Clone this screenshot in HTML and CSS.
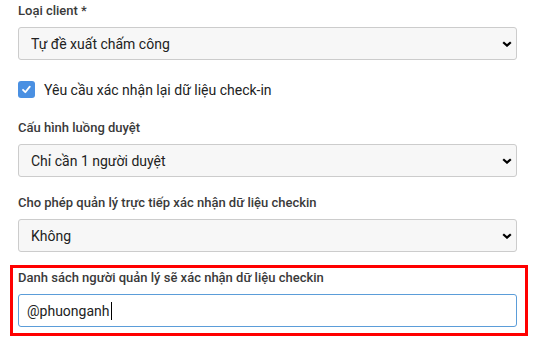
FILE: index.html
```html
<!DOCTYPE html>
<html lang="vi">
<head>
    <meta charset="UTF-8">
    <meta name="viewport" content="width=device-width, initial-scale=1.0">
    <title>Cấu hình check-in</title>
    <link rel="stylesheet" href="styles.css">
</head>
<body>
    <div class="form">
        <div class="form-group">
            <label class="form-label" for="client-type">Loại client *</label>
            <select id="client-type" class="form-select">
                <option>Tự đề xuất chấm công</option>
            </select>
        </div>
        <div class="check-row">
            <span class="checkbox">
                <svg width="17" height="17" viewBox="0 0 17 17"><path d="M5 8.8 L7.3 11.2 L11.8 5.6" fill="none" stroke="#fff" stroke-width="1.8" stroke-linecap="round" stroke-linejoin="round"/></svg>
            </span>
            <span class="check-label">Yêu cầu xác nhận lại dữ liệu check-in</span>
        </div>
        <div class="form-group">
            <label class="form-label" for="approve-flow">Cấu hình luồng duyệt</label>
            <select id="approve-flow" class="form-select">
                <option>Chỉ cần 1 người duyệt</option>
            </select>
        </div>
        <div class="form-group">
            <label class="form-label" for="manager-confirm">Cho phép quản lý trực tiếp xác nhận dữ liệu checkin</label>
            <select id="manager-confirm" class="form-select">
                <option>Không</option>
            </select>
        </div>
        <div class="form-group highlight">
            <label class="form-label">Danh sách người quản lý sẽ xác nhận dữ liệu checkin</label>
            <div class="form-input">@phuonganh<span class="caret"></span></div>
        </div>
    </div>
</body>
</html>
```

FILE: styles.css
```css
body {
    margin: 0;
    padding: 2px 17px 0 18px;
    background: #fff;
    font-family: Roboto, "Noto Sans", Arial, sans-serif;
    color: #222;
}
.form {
    display: flex;
    flex-direction: column;
    gap: 17px;
}
.form-group {
    display: flex;
    flex-direction: column;
}
.form-label {
    font-size: 13px;
    line-height: 18px;
    font-weight: 500;
    color: #3a3a3a;
    margin-bottom: 7px;
}
.form-select {
    appearance: none;
    -webkit-appearance: none;
    height: 33px;
    margin: 0;
    padding: 0 30px 0 12px;
    border: 1px solid #ccc;
    border-radius: 3px;
    background-color: #f7f7f7;
    background-image: url("data:image/svg+xml,%3Csvg xmlns='http://www.w3.org/2000/svg' width='10' height='6' viewBox='0 0 10 6'%3E%3Cpath d='M1.2 1.2 L5 4.6 L8.8 1.2' fill='none' stroke='%23000' stroke-width='2.2'/%3E%3C/svg%3E");
    background-repeat: no-repeat;
    background-position: right 4px center;
    font-family: inherit;
    font-size: 14px;
    color: #222;
}
.check-row {
    display: flex;
    align-items: center;
    gap: 9px;
    height: 25px;
}
.checkbox {
    width: 17px;
    height: 17px;
    border-radius: 3px;
    background: #4a90e2;
    display: flex;
}
.check-label {
    font-size: 14px;
    color: #222;
}
.highlight {
    border: 3px solid #f00;
    margin: -4px -11px 0 -8px;
    padding: 1px 8px 6px 5px;
}
.form-input {
    height: 31px;
    display: flex;
    align-items: center;
    padding: 0 8px;
    border: 1px solid #5b9dd9;
    border-radius: 3px;
    background: #fff;
    font-size: 14px;
    color: #222;
}
.caret {
    display: inline-block;
    width: 1px;
    height: 18px;
    background: #000;
    margin-left: 1px;
}
```
